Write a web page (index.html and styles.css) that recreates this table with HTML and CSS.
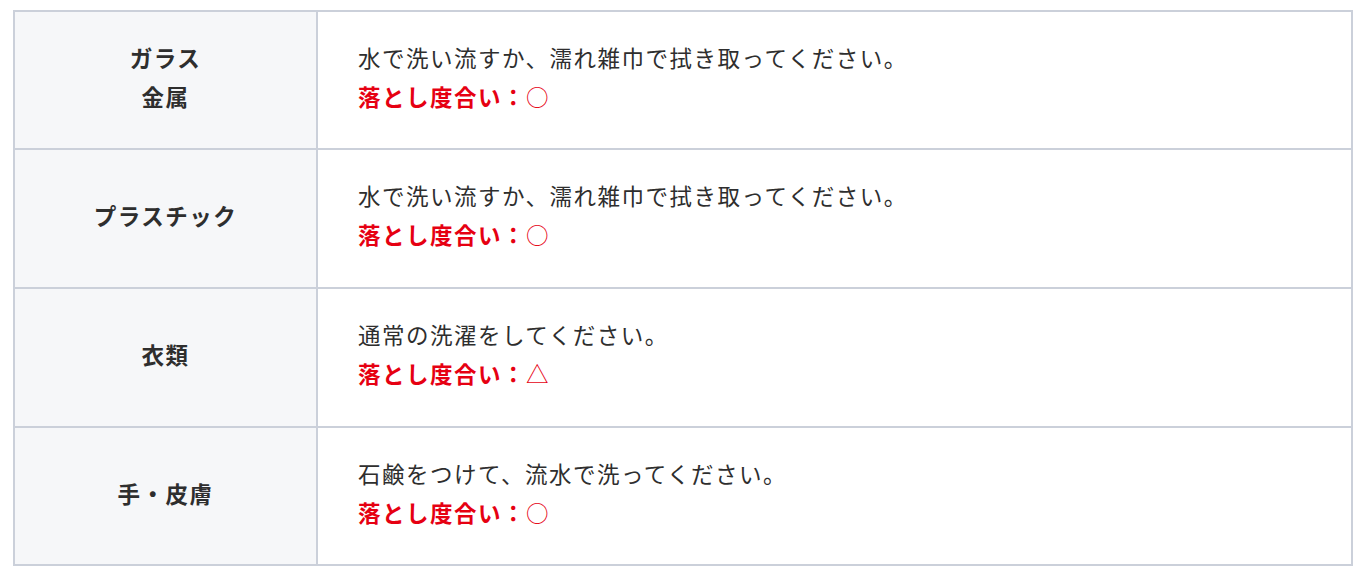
FILE: index.html
```html
<!DOCTYPE html>
<html lang="ja">
<head>
<meta charset="utf-8">
<title>落とし度合い</title>
<link rel="stylesheet" href="styles.css">
</head>
<body>
<table class="care">
  <tbody>
    <tr class="row-a">
      <th>ガラス<br>金属</th>
      <td>
        <p class="desc">水で洗い流すか、濡れ雑巾で拭き取ってください。</p>
        <p class="level">落とし度合い：<span class="mark">○</span></p>
      </td>
    </tr>
    <tr class="row-b">
      <th>プラスチック</th>
      <td>
        <p class="desc">水で洗い流すか、濡れ雑巾で拭き取ってください。</p>
        <p class="level">落とし度合い：<span class="mark">○</span></p>
      </td>
    </tr>
    <tr class="row-b">
      <th>衣類</th>
      <td>
        <p class="desc">通常の洗濯をしてください。</p>
        <p class="level">落とし度合い：<span class="mark">△</span></p>
      </td>
    </tr>
    <tr class="row-a">
      <th>手・皮膚</th>
      <td>
        <p class="desc">石鹸をつけて、流水で洗ってください。</p>
        <p class="level">落とし度合い：<span class="mark">○</span></p>
      </td>
    </tr>
  </tbody>
</table>
</body>
</html>
```

FILE: styles.css
```css
html, body {
  margin: 0;
  background: #ffffff;
}

body {
  padding: 10px 13px;
  font-family: "Noto Sans CJK JP", "Noto Sans", sans-serif;
  color: #333333;
  font-size: 22.5px;
  letter-spacing: 1.5px;
}

.care {
  width: 1340px;
  border-collapse: separate;
  border-spacing: 0;
  border-top: 2px solid #cbd0da;
  border-left: 2px solid #cbd0da;
  table-layout: fixed;
}

.care th,
.care td {
  border-right: 2px solid #cbd0da;
  border-bottom: 2px solid #cbd0da;
  padding: 26px 0 32px;
  line-height: 39px;
  vertical-align: middle;
}

.row-b th,
.row-b td {
  padding-bottom: 33px;
}

.care th {
  width: 301px;
  background: #f6f7f9;
  font-weight: 700;
  text-align: center;
  color: #2e2e2e;
}

.care td {
  padding-left: 40px;
  text-align: left;
}

.desc,
.level {
  margin: 0;
}

.desc {
  color: #2e2e2e;
}

.level {
  color: #e60012;
  font-weight: 700;
}

.mark {
  font-weight: 400;
}
```
